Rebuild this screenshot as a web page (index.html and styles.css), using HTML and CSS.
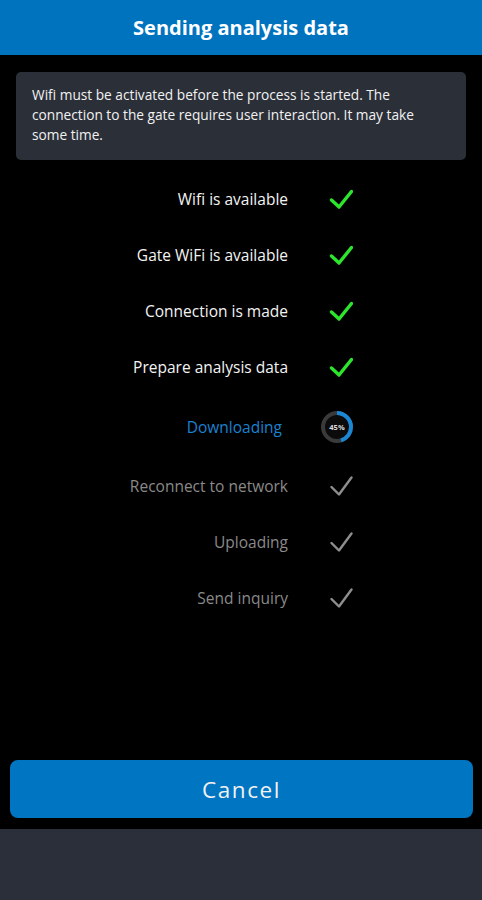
FILE: index.html
```html
<!DOCTYPE html>
<html>
<head>
<meta charset="utf-8">
<link rel="stylesheet" href="styles.css">
</head>
<body>
<div class="screen">
  <header class="topbar">Sending analysis data</header>
  <main class="content">
    <div class="info">Wifi must be activated before the process is started. The connection to the gate requires user interaction. It may take some time.</div>
    <div class="steps">
      <div class="step done"><span class="label">Wifi is available</span><span class="icon"><svg width="24" height="20" viewBox="0 0 24 20"><path d="M2.5 11 L10 18 L22.5 2.5" fill="none" stroke="currentColor" stroke-width="3.4" stroke-linecap="round" stroke-linejoin="round"/></svg></span></div>
      <div class="step done"><span class="label">Gate WiFi is available</span><span class="icon"><svg width="24" height="20" viewBox="0 0 24 20"><path d="M2.5 11 L10 18 L22.5 2.5" fill="none" stroke="currentColor" stroke-width="3.4" stroke-linecap="round" stroke-linejoin="round"/></svg></span></div>
      <div class="step done"><span class="label">Connection is made</span><span class="icon"><svg width="24" height="20" viewBox="0 0 24 20"><path d="M2.5 11 L10 18 L22.5 2.5" fill="none" stroke="currentColor" stroke-width="3.4" stroke-linecap="round" stroke-linejoin="round"/></svg></span></div>
      <div class="step done"><span class="label">Prepare analysis data</span><span class="icon"><svg width="24" height="20" viewBox="0 0 24 20"><path d="M2.5 11 L10 18 L22.5 2.5" fill="none" stroke="currentColor" stroke-width="3.4" stroke-linecap="round" stroke-linejoin="round"/></svg></span></div>
      <div class="step active"><span class="label">Downloading</span><span class="progress"><svg width="36" height="36" viewBox="0 0 36 36"><circle cx="18" cy="18" r="14" fill="#0b0b0b" stroke="#3a3a3a" stroke-width="4"/><circle cx="18" cy="18" r="14" fill="none" stroke="#1a86d6" stroke-width="4" stroke-dasharray="39.6 88" transform="rotate(-90 18 18)"/></svg><span class="pct">45%</span></span></div>
      <div class="step pending"><span class="label">Reconnect to network</span><span class="icon"><svg width="24" height="20" viewBox="0 0 24 20"><path d="M2.5 11 L10 18.5 L22.5 1.5" fill="none" stroke="currentColor" stroke-width="2.4" stroke-linecap="round" stroke-linejoin="round"/></svg></span></div>
      <div class="step pending"><span class="label">Uploading</span><span class="icon"><svg width="24" height="20" viewBox="0 0 24 20"><path d="M2.5 11 L10 18.5 L22.5 1.5" fill="none" stroke="currentColor" stroke-width="2.4" stroke-linecap="round" stroke-linejoin="round"/></svg></span></div>
      <div class="step pending"><span class="label">Send inquiry</span><span class="icon"><svg width="24" height="20" viewBox="0 0 24 20"><path d="M2.5 11 L10 18.5 L22.5 1.5" fill="none" stroke="currentColor" stroke-width="2.4" stroke-linecap="round" stroke-linejoin="round"/></svg></span></div>
    </div>
  </main>
  <div class="actions"><button class="cancel">Cancel</button></div>
  <footer class="bottom"></footer>
</div>
</body>
</html>
```
FILE: styles.css
```css
* { box-sizing: border-box; }
html, body { margin: 0; padding: 0; background: #000; }
body { font-family: "Open Sans", "Noto Sans", sans-serif; color: #eee; }
.screen { width: 482px; height: 900px; display: flex; flex-direction: column; background: #000; }
.topbar {
  height: 55px; background: #0073bf; color: #fff;
  font-weight: 700; font-size: 20px; text-align: center; line-height: 55px;
}
.content { flex: 1; padding: 17px 16px 0; }
.info {
  background: #2b2f38; border-radius: 5px; padding: 13px 16px 14px 16px;
  font-size: 13.7px; line-height: 20px; color: #f2f2f2; height: 88px;
}
.steps { margin-top: 11px; margin-left: -16px; }
.step { display: flex; align-items: center; height: 56px; }
.label { width: 288px; text-align: right; font-size: 15.5px; }
.icon { margin-left: 41px; width: 24px; height: 20px; display: flex; }
.done .label { color: #f3f3f3; }
.done .icon { color: #2ee52e; }
.pending .label { color: #8a8a8a; }
.pending .icon { color: #8e8e8e; }
.active { height: 63px; }
.active .label { color: #1a82d0; width: 282px; }
.progress { margin-left: 37px; width: 36px; height: 36px; position: relative; display: flex; }
.pct { position: absolute; inset: 0; display: flex; align-items: center; justify-content: center; font-size: 7.5px; font-weight: 700; color: #ddd; }
.actions { padding: 0 9px 11px 10px; }
.cancel {
  width: 100%; height: 58px; border: none; border-radius: 8px; background: #0075c2;
  color: #f2f2f2; font-family: "Open Sans", "Noto Sans", sans-serif; font-size: 22.5px; letter-spacing: 1.6px;
}
.bottom { height: 71px; background: #2b2f39; }
```
